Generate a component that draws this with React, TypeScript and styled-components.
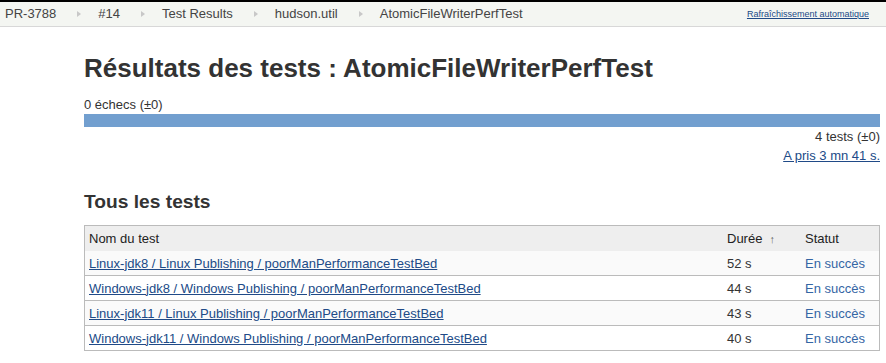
import React from "react";
import styled, { createGlobalStyle } from "styled-components";

const Global = createGlobalStyle`
  html, body { margin: 0; padding: 0; background: #fff; }
  body { font-family: "Liberation Sans", Arial, sans-serif; font-size: 13px; color: #333; }
`;

const Page = styled.div`
  width: 886px;
`;

const Breadcrumbs = styled.div`
  display: flex;
  align-items: center;
  height: 24px;
  border-top: 2px solid #000;
  border-bottom: 1px solid #d8d8d8;
  background: #f4f6f2;
  padding: 0 17px 0 5px;
`;

const Crumbs = styled.ul`
  display: flex;
  align-items: center;
  list-style: none;
  margin: 0;
  padding: 0;
  flex: 1;
`;

const Crumb = styled.li`
  display: flex;
  align-items: center;
  font-size: 13px;
  color: #444;
  line-height: 16px;
`;

const Sep = styled.span`
  display: inline-block;
  width: 0;
  height: 0;
  margin: 0 17px 0 21px;
  border-top: 3.5px solid transparent;
  border-bottom: 3.5px solid transparent;
  border-left: 4px solid #c8c8c8;
`;

const AutoRefresh = styled.a`
  font-size: 9px;
  color: #204a87;
  text-decoration: underline;
`;

const Main = styled.div`
  padding: 0 6px 0 84px;
`;

const Title = styled.h1`
  margin: 26px 0 0;
  font-size: 26px;
  line-height: 30px;
  font-weight: bold;
  color: #333;
`;

const Failures = styled.div`
  margin-top: 14px;
  line-height: 15px;
`;

const Bar = styled.div`
  margin-top: 2px;
  height: 13px;
  background: #729fcf;
`;

const Summary = styled.div`
  text-align: right;
  line-height: 19px;
`;

const Link = styled.a`
  color: #204a87;
  text-decoration: underline;
`;

const Section = styled.h2`
  margin: 26px 0 0;
  font-size: 19.2px;
  line-height: 22px;
  font-weight: bold;
  color: #333;
`;

const Table = styled.table`
  margin-top: 12px;
  width: 796px;
  border-collapse: collapse;
  border: 1px solid #bbb;
  table-layout: fixed;
`;

const Th = styled.th<{ $w?: number }>`
  ${(p) => (p.$w ? `width: ${p.$w}px;` : "")}
  background: #eeeeee;
  text-align: left;
  font-weight: normal;
  color: #222;
  height: 25px;
  padding: 0 4px;
  font-size: 13px;
`;

const SortArrow = styled.span`
  font-size: 11px;
  color: #666;
  margin-left: 7px;
`;

const Tr = styled.tr<{ $odd: boolean }>`
  background: ${(p) => (p.$odd ? "#fafafa" : "#fff")};
  & + & {
    border-top: 1px solid #bbb;
  }
`;

const Td = styled.td`
  height: 24px;
  padding: 0 4px;
  color: #333;
`;

const Status = styled.span`
  color: #3465a4;
`;

const rows = [
  { name: "Linux-jdk8 / Linux Publishing / poorManPerformanceTestBed", d: "52 s" },
  { name: "Windows-jdk8 / Windows Publishing / poorManPerformanceTestBed", d: "44 s" },
  { name: "Linux-jdk11 / Linux Publishing / poorManPerformanceTestBed", d: "43 s" },
  { name: "Windows-jdk11 / Windows Publishing / poorManPerformanceTestBed", d: "40 s" },
];

const crumbs = ["PR-3788", "#14", "Test Results", "hudson.util", "AtomicFileWriterPerfTest"];

export default function App() {
  return (
    <Page>
      <Global />
      <Breadcrumbs>
        <Crumbs>
          {crumbs.map((c, i) => (
            <Crumb key={c}>
              {c}
              {i < crumbs.length - 1 && <Sep />}
            </Crumb>
          ))}
        </Crumbs>
        <AutoRefresh href="#">Rafraîchissement automatique</AutoRefresh>
      </Breadcrumbs>
      <Main>
        <Title>Résultats des tests : AtomicFileWriterPerfTest</Title>
        <Failures>0 échecs (±0)</Failures>
        <Bar />
        <Summary>
          4 tests (±0)
          <br />
          <Link href="#">A pris 3 mn 41 s.</Link>
        </Summary>
        <Section>Tous les tests</Section>
        <Table>
          <thead>
            <tr>
              <Th>Nom du test</Th>
              <Th $w={70}>
                Durée<SortArrow>↑</SortArrow>
              </Th>
              <Th $w={70}>Statut</Th>
            </tr>
          </thead>
          <tbody>
            {rows.map((r, i) => (
              <Tr key={r.name} $odd={i % 2 === 0}>
                <Td>
                  <Link href="#">{r.name}</Link>
                </Td>
                <Td>{r.d}</Td>
                <Td>
                  <Status>En succès</Status>
                </Td>
              </Tr>
            ))}
          </tbody>
        </Table>
      </Main>
    </Page>
  );
}
